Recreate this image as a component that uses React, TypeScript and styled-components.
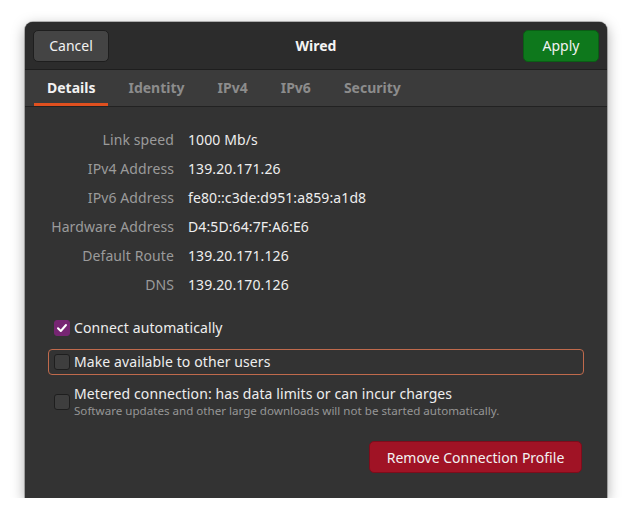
import React from "react";
import styled, { createGlobalStyle, css } from "styled-components";

const GlobalStyle = createGlobalStyle`
  html, body { margin: 0; padding: 0; background: #ffffff; }
  body { font-family: "Noto Sans", "Open Sans", sans-serif; font-size: 14px; -webkit-font-smoothing: antialiased; }
  * { box-sizing: border-box; }
`;

const Page = styled.div`
  padding: 22px 0 0 25px;
`;

const Window = styled.div`
  width: 582px;
  height: 476px;
  background: #333333;
  border-radius: 8px 8px 0 0;
  overflow: hidden;
  display: flex;
  flex-direction: column;
  box-shadow: 0 4px 14px rgba(0, 0, 0, 0.35), 0 0 0 1px rgba(0, 0, 0, 0.25);
`;

const HeaderBar = styled.div`
  height: 48px;
  flex: none;
  display: grid;
  grid-template-columns: auto 1fr auto;
  align-items: center;
  padding: 0 8px;
  background: #2c2c2c;
  border-bottom: 1px solid #1e1e1e;
`;

const Title = styled.div`
  text-align: center;
  font-weight: 700;
  color: #f4f4f4;
  font-size: 14px;
`;

type Variant = "normal" | "suggested" | "destructive";

const Button = styled.button<{ $variant?: Variant; $width?: number }>`
  height: 32px;
  width: ${(p) => (p.$width ? `${p.$width}px` : "auto")};
  padding: 0 12px;
  border-radius: 5px;
  font-family: inherit;
  font-size: 14px;
  color: #f2f2f2;
  cursor: pointer;
  ${(p) =>
    p.$variant === "suggested"
      ? css`
          background: #0e781c;
          border: 1px solid #0a5e15;
        `
      : p.$variant === "destructive"
      ? css`
          background: #a01325;
          border: 1px solid #7e0c1b;
        `
      : css`
          background: #444444;
          border: 1px solid #1e1e1e;
        `}
`;

const TabBar = styled.div`
  height: 37px;
  flex: none;
  display: flex;
  align-items: stretch;
  gap: 7px;
  padding: 0 9px;
  background: #3b3b3b;
  border-bottom: 1px solid #222222;
`;

const Tab = styled.div<{ $active?: boolean }>`
  display: flex;
  align-items: center;
  padding: 0 13px 1px;
  font-weight: 700;
  font-size: 14px;
  color: ${(p) => (p.$active ? "#f2f2f2" : "#8c8c8c")};
  box-shadow: ${(p) => (p.$active ? "inset 0 -3px 0 #e0501f" : "none")};
`;

const Content = styled.div`
  flex: 1;
  display: flex;
  flex-direction: column;
  padding: 18px 23px 25px;
`;

const InfoGrid = styled.div`
  display: grid;
  grid-template-columns: 126px auto;
  grid-auto-rows: 29px;
  column-gap: 14px;
  align-items: center;
`;

const Label = styled.div`
  text-align: right;
  color: #9b9b9b;
  white-space: nowrap;
  letter-spacing: 0.1px;
`;

const Value = styled.div`
  color: #eeeeee;
  white-space: nowrap;
  letter-spacing: 0.1px;
`;

const Options = styled.div`
  margin-top: 16px;
  display: flex;
  flex-direction: column;
  gap: 8px;
`;

const OptionRow = styled.div<{ $focused?: boolean; $padTop?: number }>`
  display: flex;
  align-items: flex-start;
  gap: 4px;
  padding: ${(p) => p.$padTop ?? 4}px 5px 4px;
  min-height: 26px;
  border-radius: 4px;
  border: 1px solid ${(p) => (p.$focused ? "#c06a4c" : "transparent")};
`;

const Box = styled.div<{ $checked?: boolean; $offset?: number }>`
  flex: none;
  width: 16px;
  height: 16px;
  margin-top: ${(p) => p.$offset ?? 0}px;
  border-radius: 3px;
  display: flex;
  align-items: center;
  justify-content: center;
  background: ${(p) => (p.$checked ? "#762572" : "#3e3e3e")};
  border: 1px solid ${(p) => (p.$checked ? "#762572" : "#1e1e1e")};
`;

const OptionText = styled.div`
  display: flex;
  flex-direction: column;
`;

const OptionTitle = styled.div`
  color: #eeeeee;
  line-height: 16px;
  letter-spacing: 0.1px;
`;

const OptionSub = styled.div`
  color: #969696;
  font-size: 11.6px;
  line-height: 13px;
  margin-top: 2px;
`;

const Footer = styled.div`
  margin-top: auto;
  display: flex;
  justify-content: flex-end;
  padding-right: 2px;
`;

const Check = () => (
  <svg width="12" height="12" viewBox="0 0 12 12">
    <path d="M2 6.2 L4.8 9 L10 3" fill="none" stroke="#ffffff" strokeWidth="2" strokeLinecap="round" strokeLinejoin="round" />
  </svg>
);

const info: [string, string][] = [
  ["Link speed", "1000 Mb/s"],
  ["IPv4 Address", "139.20.171.26"],
  ["IPv6 Address", "fe80::c3de:d951:a859:a1d8"],
  ["Hardware Address", "D4:5D:64:7F:A6:E6"],
  ["Default Route", "139.20.171.126"],
  ["DNS", "139.20.170.126"],
];

const tabs = ["Details", "Identity", "IPv4", "IPv6", "Security"];

export default function App() {
  return (
    <Page>
      <GlobalStyle />
      <Window>
        <HeaderBar>
          <Button $width={76}>Cancel</Button>
          <Title>Wired</Title>
          <Button $variant="suggested" $width={76}>Apply</Button>
        </HeaderBar>
        <TabBar>
          {tabs.map((t, i) => (
            <Tab key={t} $active={i === 0}>{t}</Tab>
          ))}
        </TabBar>
        <Content>
          <InfoGrid>
            {info.map(([l, v]) => (
              <React.Fragment key={l}>
                <Label>{l}</Label>
                <Value>{v}</Value>
              </React.Fragment>
            ))}
          </InfoGrid>
          <Options>
            <OptionRow>
              <Box $checked>
                <Check />
              </Box>
              <OptionText>
                <OptionTitle>Connect automatically</OptionTitle>
              </OptionText>
            </OptionRow>
            <OptionRow $focused>
              <Box />
              <OptionText>
                <OptionTitle>Make available to other users</OptionTitle>
              </OptionText>
            </OptionRow>
            <OptionRow $padTop={2}>
              <Box $offset={8} />
              <OptionText>
                <OptionTitle>Metered connection: has data limits or can incur charges</OptionTitle>
                <OptionSub>Software updates and other large downloads will not be started automatically.</OptionSub>
              </OptionText>
            </OptionRow>
          </Options>
          <Footer>
            <Button $variant="destructive" $width={213}>Remove Connection Profile</Button>
          </Footer>
        </Content>
      </Window>
    </Page>
  );
}
